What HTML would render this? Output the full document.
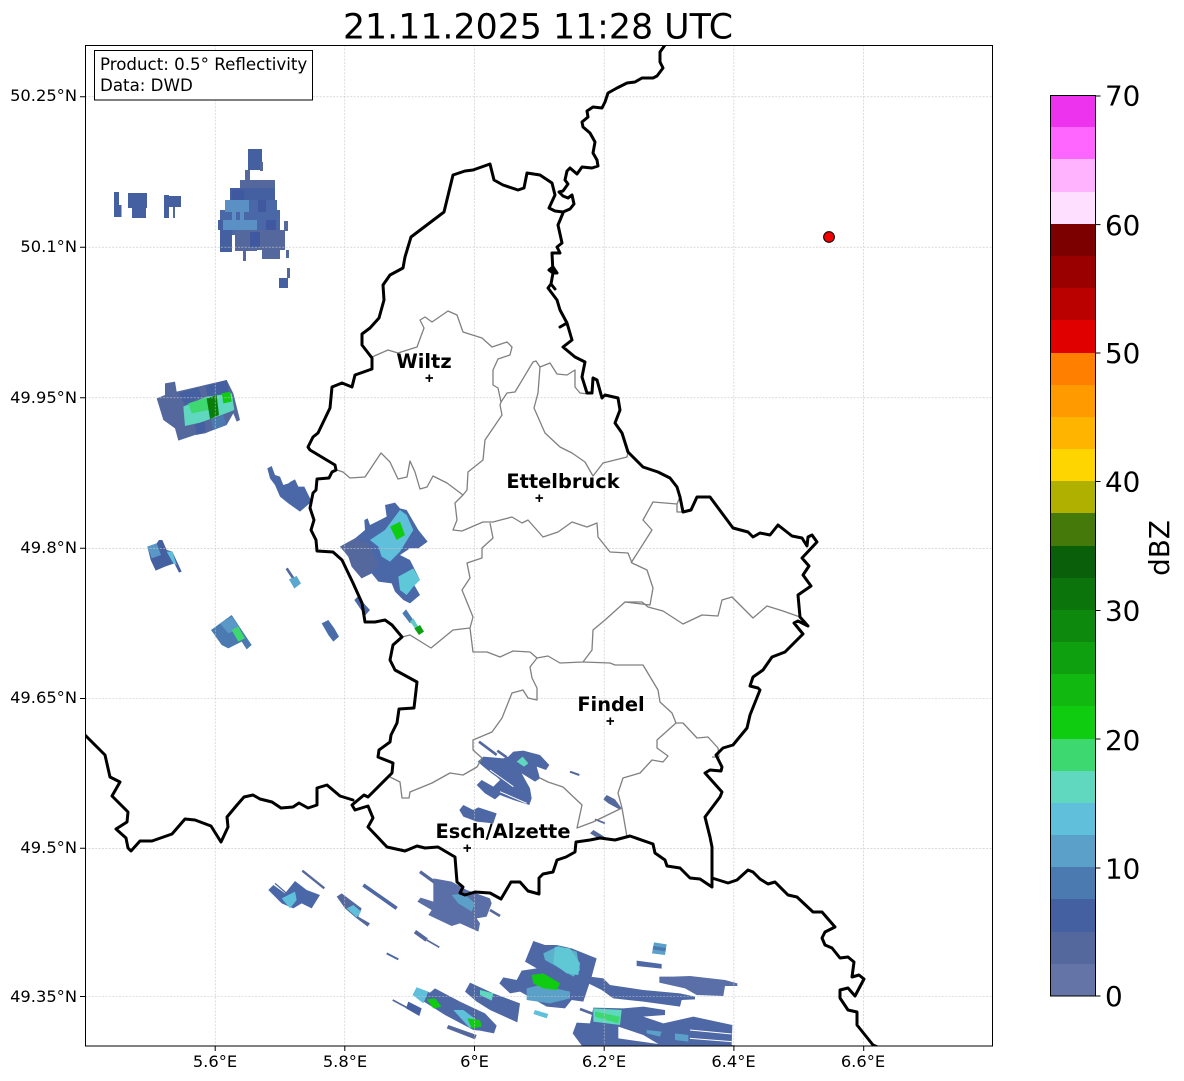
<!DOCTYPE html>
<html><head><meta charset="utf-8"><style>
html,body{margin:0;padding:0;background:#fff}
svg{display:block}
text{font-family:"DejaVu Sans",sans-serif;fill:#000}
.t{font-size:16.3px}
.n{font-size:16.67px}
.c{font-size:27.8px}
.b{font-size:19.4px;font-weight:bold;text-anchor:middle}
.m{text-anchor:middle}
.e{text-anchor:end}
</style></head><body>
<svg width="1184" height="1081" viewBox="0 0 1184 1081" xmlns="http://www.w3.org/2000/svg">
<defs><clipPath id="ax"><rect x="85" y="45" width="907.5" height="1001"/></clipPath></defs>
<rect width="1184" height="1081" fill="#fff"/>
<text x="538" y="38.5" class="m" style="font-size:34.75px">21.11.2025 11:28 UTC</text>

<g clip-path="url(#ax)">
<!-- radar top-left -->
<g fill="#4460a0">
<rect x="114" y="192" width="5" height="25"/><rect x="119" y="205" width="2.5" height="12"/>
<rect x="128" y="193" width="19" height="15"/><rect x="132" y="208" width="14" height="10"/>
<rect x="164" y="195" width="5" height="23"/><rect x="169" y="196" width="12" height="11"/><rect x="173" y="207" width="2" height="11" fill="#54689e"/>
<rect x="248" y="149" width="14" height="21"/><rect x="245" y="170" width="5" height="10" fill="#54689e"/><rect x="260" y="162" width="3" height="9" fill="#54689e"/>
<rect x="240" y="180" width="35" height="9" fill="#54689e"/>
<rect x="230" y="188" width="45" height="14"/>
<rect x="225" y="200" width="52" height="12" fill="#4a68a8"/>
<rect x="220" y="210" width="60" height="21" fill="#4a68a8"/>
<rect x="218" y="220" width="6" height="10"/>
<rect x="220" y="230" width="12" height="22"/>
<rect x="232" y="230" width="26" height="5" fill="#4a68a8"/>
<rect x="235" y="230" width="22" height="21" fill="#54689e"/>
<rect x="257" y="230" width="28" height="20" fill="#54689e"/>
<rect x="262" y="250" width="18" height="9" fill="#54689e"/>
<rect x="243" y="250" width="3" height="11" fill="#54689e"/>
<rect x="284" y="221" width="4" height="10" fill="#54689e"/>
<rect x="286" y="250" width="3" height="8" fill="#54689e"/>
<rect x="287" y="268" width="3" height="10" fill="#54689e"/>
<rect x="279" y="278" width="9" height="10"/>
<rect x="225" y="200" width="24" height="12" fill="#5a90c4"/>
<rect x="223" y="220" width="34" height="10" fill="#5a90c4"/>
<rect x="232" y="210" width="4" height="20" fill="#5a90c4"/>
<rect x="240" y="210" width="4" height="20" fill="#5a90c4"/>
<rect x="266" y="220" width="10" height="10" fill="#3f58a0"/>
<rect x="250" y="232" width="10" height="15" fill="#3f58a0"/>
<rect x="258" y="200" width="8" height="12" fill="#3f58a0"/>
<rect x="232" y="190" width="12" height="10" fill="#3f58a0"/>
</g>

<!-- radar west blobs, zoom 6 coordinates -->
<g transform="translate(85 370) scale(.33333)">
<polygon fill="#54689e" points="240,40 270,35 275,65 340,50 360,45 425,30 445,70 465,150 455,155 445,130 425,165 385,180 360,190 330,195 280,212 270,175 235,150 215,85 240,75"/>
<polygon fill="#4460a0" points="362,48 425,30 432,65 368,85"/>
<polygon fill="#4460a0" points="280,70 340,52 350,80 300,105"/>
<polygon fill="#4460a0" points="330,165 358,155 362,185 335,195"/>
<polygon fill="#4a7ab0" points="378,150 415,135 425,165 385,180"/>
<polygon fill="#60d8c0" points="295,110 365,80 440,70 448,120 410,135 345,158 300,168"/>
<polygon fill="#3dd870" points="310,100 368,82 380,118 320,130"/>
<polygon fill="#0a7d0a" points="365,85 395,75 402,135 375,147"/>
<polygon fill="#10cc10" points="410,70 435,65 440,95 415,100"/>
<polygon fill="#4a68a8" points="547,295 560,288 570,315 585,320 595,345 610,340 617,335 630,328 640,350 658,350 680,395 645,425 610,400 585,380 570,345 555,325"/>
<polygon fill="#4460a0" points="187,530 215,520 222,510 232,510 245,540 262,545 290,605 282,608 268,580 240,590 212,602 197,570"/>
<polygon fill="#5a98c8" points="187,530 215,520 228,555 200,565"/>
<polygon fill="#60c0dc" points="245,545 262,545 275,585 265,580"/>
<path d="M605 595L625 625" stroke="#54689e" stroke-width="8" fill="none"/>
<polygon fill="#5aa8d0" points="612,628 635,618 648,640 628,656"/>
<polygon fill="#4a7ab0" points="378,780 440,735 480,795 500,825 485,838 470,815 430,835 410,825"/>
<polygon fill="#5a98c8" points="405,760 440,740 465,775 430,790"/>
<polygon fill="#3dd870" points="440,780 460,770 480,805 460,815"/>
<polygon fill="#4a6ca8" points="710,760 730,750 748,775 762,800 745,815 730,795"/>
<polygon fill="#4a68a8" points="765,530 810,505 840,480 838,450 848,445 855,465 905,440 900,405 930,398 945,415 965,420 1000,480 1028,515 1000,535 975,535 945,555 975,570 1005,630 985,640 1005,675 975,700 955,690 930,665 920,640 880,635 860,610 830,625 800,590 790,560"/>
<polygon fill="#54689e" points="765,530 810,505 850,520 880,590 830,625 800,590 790,560"/>
<polygon fill="#60c0dc" points="855,510 900,480 945,420 965,435 985,480 945,545 915,575 890,560 880,530"/>
<polygon fill="#10cc10" points="915,470 945,455 960,495 935,510"/>
<polygon fill="#5fc8d8" points="940,620 985,595 1005,630 985,650 965,675 945,660"/>
<polygon fill="#4a7ab0" points="952,730 963,718 985,750 975,760"/>
<polygon fill="#60c8c8" points="975,755 985,745 1000,770 990,775"/>
<polygon fill="#0ea00e" points="988,775 1005,765 1017,785 1002,795"/>
<polygon fill="#4a68a8" points="808,690 818,680 855,720 840,737"/>
</g>

<!-- radar centre south, zoom 3 coordinates -->
<g transform="translate(300 480) scale(.33333)">
<path d="M537 785L590 825M592 812L620 832" stroke="#54689e" stroke-width="8" fill="none"/>
<polygon fill="#4e68a6" points="533,845 550,830 610,835 625,830 640,815 670,812 720,825 748,855 738,870 710,860 720,895 705,905 665,880 690,925 640,920 610,905 575,880 550,860"/>
<polygon fill="#4e68a6" points="560,860 640,880 690,925 695,955 688,975 640,960 600,945 585,958 555,940 530,915 545,900 580,920 600,900"/>
<path d="M570 870L640 920M600 935L680 970" stroke="#fff" stroke-width="3" fill="none"/>
<polygon fill="#60d8c0" points="650,845 668,830 685,850 672,860"/>
<path d="M810 875L838 885" stroke="#54689e" stroke-width="6" fill="none"/>
<polygon fill="#4e68a6" points="478,990 490,975 520,990 535,982 590,1000 580,1030 530,1025 490,1010"/>
<polygon fill="#54689e" points="910,958 920,945 945,958 965,985 958,988 925,970"/>
<path d="M885 1018L915 1030" stroke="#54689e" stroke-width="5" fill="none"/>
<polygon fill="#54689e" points="870,1060 880,1050 905,1065 925,1078 900,1078"/>
</g>

<!-- radar south, zoom 10 coordinates -->
<g transform="translate(85 720) scale(.33333)">
<polygon fill="#4a68a8" points="550,510 565,495 600,520 630,483 665,510 705,525 680,565 650,550 625,565 590,550"/>
<polygon fill="#5fc0dc" points="590,535 630,515 635,540 615,565"/>
<path d="M570 490L605 520" stroke="#54689e" stroke-width="4" fill="none"/>
<path d="M652 452L718 505" stroke="#54689e" stroke-width="7" fill="none"/>
<polygon fill="#54689e" points="755,530 770,520 830,565 820,590 855,610 848,620 815,595 780,565"/>
<polygon fill="#60c0dc" points="785,565 805,555 828,575 815,592"/>
<path d="M835 495L935 565" stroke="#4e68a6" stroke-width="11" fill="none"/>
</g>

<!-- radar south, zoom 5 coordinates -->
<g transform="translate(380 860) scale(.33333)">
<path d="M120 35L175 75" stroke="#54689e" stroke-width="10" fill="none"/>
<polygon fill="#5a6ea8" points="160,55 215,65 260,90 330,115 335,130 320,170 290,175 300,190 295,215 240,190 215,198 145,165 155,150 112,125 122,113 160,125"/>
<polygon fill="#5ba0c8" points="215,105 250,100 285,130 275,155 235,130"/>
<path d="M330 150L360 168" stroke="#54689e" stroke-width="8" fill="none"/>
<path d="M105 215L140 240" stroke="#54689e" stroke-width="12" fill="none"/>
<path d="M140 240L178 262" stroke="#54689e" stroke-width="5" fill="none"/>
<path d="M20 280L55 298" stroke="#4e68a6" stroke-width="6" fill="none"/>
<polygon fill="#4e68a6" points="435,305 460,243 495,255 530,255 575,265 650,295 635,350 625,380 610,425 575,420 555,445 500,440 420,395 390,400 358,370 370,352 410,360 425,332 470,325"/>
<polygon fill="#5bb0cc" points="490,280 535,258 590,275 600,330 580,350 530,320 495,300"/>
<polygon fill="#60c8d4" points="525,260 570,265 600,310 595,345 560,340 520,310"/>
<polygon fill="#5ba0c8" points="440,385 480,375 570,395 570,415 510,430 440,420"/>
<polygon fill="#10cc10" points="455,345 490,340 540,370 530,390 490,385 460,370"/>
<polygon fill="#4e68a6" points="630,350 670,355 690,375 790,390 900,400 945,410 945,418 905,420 900,440 790,425 700,415 665,390 625,370"/>
<polygon fill="#4e68a6" points="770,302 845,312 845,326 770,318"/>
<polygon fill="#5ba0c8" points="822,247 860,253 855,285 816,280"/>
<polygon fill="#4a7ab0" points="820,258 858,264 856,274 818,268"/>
<polygon fill="#5a6ea8" points="838,350 880,350 930,348 1035,360 1072,370 1072,378 1035,378 1030,408 950,405 915,385 838,368"/>
<path d="M600 447L640 462" stroke="#54689e" stroke-width="8" fill="none"/>
<polygon fill="#4e68a6" points="640,443 730,445 790,440 855,450 855,465 790,470 850,490 940,470 1057,495 1055,555 1095,560 615,570 578,520 590,488 630,490"/>
<polygon fill="#fff" points="715,500 790,525 835,552 715,535"/>
<polygon fill="#60d8c0" points="640,445 725,450 720,495 640,485"/>
<polygon fill="#3dd870" points="645,455 720,470 715,490 645,470"/>
<polygon fill="#5ba0c8" points="885,520 925,525 925,545 885,540"/>
<polygon fill="#5ba0c8" points="800,510 845,515 840,530 800,520"/>
<path d="M930 510L1055 522M930 535L1055 545" stroke="#fff" stroke-width="3" fill="none"/>
<polygon fill="#4e68a6" points="98,405 110,382 150,398 165,385 240,425 315,460 350,497 342,520 300,512 280,510 195,465 140,430"/>
<polygon fill="#60c0dc" points="98,405 110,382 145,395 130,430"/>
<polygon fill="#60c0dc" points="220,450 250,450 290,480 270,505"/>
<polygon fill="#10cc10" points="140,418 165,415 185,440 160,445"/>
<polygon fill="#10cc10" points="262,475 300,480 305,500 275,505"/>
<path d="M38 420L85 445" stroke="#54689e" stroke-width="5" fill="none"/>
<polygon fill="#4460a0" points="85,425 125,445 118,468 78,445"/>
<polygon fill="#54689e" points="205,495 290,525 285,538 200,505"/>
<polygon fill="#4e68a6" points="255,395 270,368 340,400 420,430 412,487 330,450 290,425"/>
<polygon fill="#60d8c0" points="300,390 340,400 335,422 300,405"/>
<polygon fill="#60c0dc" points="465,450 505,462 500,475 460,462"/>
</g>

<!-- grid -->
<g stroke="#c4c4c4" stroke-width=".6" stroke-dasharray="2 1.4" fill="none">
<path d="M215.2 45V1046M344.8 45V1046M474.5 45V1046M604.2 45V1046M733.9 45V1046M863.7 45V1046"/>
<path d="M85 96.8H992M85 247.2H992M85 397.8H992M85 548.3H992M85 698.5H992M85 848.3H992M85 996.5H992"/>
</g>

<!-- canton borders -->
<g fill="none" stroke="#808080" stroke-width="1.3" stroke-linejoin="round">
<polyline points="372,357 388,350 398,353 417,347 424,328 420,320 425,317 432,322 448,311 457,315 463,332 482,338 492,347 507,342 512,347 510,355 498,359 493,370 493,385 498,388 501,402 500,405 502,415 485,440 483,460 468,472 467,490 463,495 455,503 457,520 453,530 462,531 483,522 493,522 512,517 522,523 528,520 543,537 558,532 572,522 587,527 597,523 598,537 610,552 628,553 632,563 647,570 653,588 650,605 625,602 605,620 593,630 592,650 583,662 560,663 548,656 537,658 530,667 532,678 537,688 537,700 528,698 523,690 512,693 502,718 492,732 473,740 473,750 482,758 477,767 463,775 450,773 432,783 410,792 409,798 402,798 400,782 390,777"/>
<polyline points="625,602 642,602 648,607 663,611 683,624 702,615 718,616 722,600 732,597 753,618 767,606 783,611 800,617"/>
<polyline points="631,563 652,530 643,520 653,502 677,504 677,512 683,512"/>
<polyline points="677,504 680,497"/>
<polyline points="402,637 410,635 431,648 453,630 470,628 473,652 487,652 500,657 513,651 530,652 537,658"/>
<polyline points="470,628 473,617 462,590 470,578 467,563 482,558 482,548 493,538 490,523"/>
<polyline points="583,662 610,663 615,665 643,665 658,690 660,702 672,713 676,723 683,723 697,738 708,737 718,748 719,757 712,757"/>
<polyline points="676,723 657,740 657,748 668,756 663,762 652,760 640,773 623,778 618,793 622,808 627,837"/>
<polyline points="622,808 593,822 577,828 582,805 563,787 548,782 540,778"/>
<polyline points="501,402 507,393 515,392 533,362 536,361 540,367 550,363 557,374 567,375 575,370 575,387 580,393 588,394"/>
<polyline points="540,367 538,393 534,408 545,433 560,447 572,453 585,462 593,476 603,463 627,457 628,452"/>
<polyline points="337,470 343,472 350,478 365,477 381,453 390,462 398,479 407,477 410,461 415,472 420,489 427,487 433,476 447,483 463,495"/>
</g>

<!-- country borders -->
<g fill="none" stroke="#000" stroke-width="3" stroke-linejoin="round" stroke-linecap="round">
<polyline points="665,45 660,52 660,62 663,68 657,76 653,78 642,78 635,82 627,83 617,88 608,93 605,102 602,108 593,107 587,111 588,117 582,122 583,127 590,133 595,142 593,153 597,160 598,166 592,168 582,167 577,174 570,168 567,171 565,180 568,184 563,191 559,192 563,196 568,198 572,195 574,204 570,209 563,212 555,211 549,208 555,195 552,183 540,175 527,173 524,188 518,190 503,185 494,180 490,164 473,170 465,171 453,175 444,212 411,237 405,257 403,268 390,275 383,285 384,300 379,318 370,328 362,334 362,345 372,358 372,369 355,375 352,387 342,383 332,387 330,408 318,433 313,437 308,447 310,450 335,465 336,470 332,472 329,478 317,479 316,490 313,493 310,508 314,520 311,530 316,540 317,551 333,552 342,560 353,583 362,603 365,622 375,622 385,620 392,625 402,637 393,645 390,660 395,670 417,682 414,708 399,709 397,723 391,735 390,742 379,750 378,757 393,763 392,773 368,797 364,795 352,805 355,810 368,806 373,818 368,827 387,847 405,851 417,846 425,848 438,847 455,857 457,882 463,887 460,893 465,895 475,892 490,893 501,899 511,882 520,882 528,891 539,894 539,878 543,874 553,872 557,860 566,857 575,852 576,842 590,840 600,838 615,840 630,836 653,844 655,853 665,860 667,866 680,868 690,878 700,879 712,887 712,847 710,837 705,817 720,797 722,792 705,773 710,770 721,771 722,767 716,755 723,748 733,745 747,728 750,715 760,690 758,688 750,686 753,677 763,670 772,657 785,652 803,634 794,623 798,621 808,626 800,617 798,595 811,586 803,575 809,566 802,558 817,542 812,535 808,537 807,546 802,538 792,536 778,525 770,535 760,533 753,537 748,532 733,528 710,497 697,497 691,510 683,512 680,497 677,487 670,478 658,472 643,467 628,452 622,433 615,423 620,410 618,398 605,395 602,398 597,380 593,378 592,393 587,393 582,377 585,362 575,357 563,347 572,340 567,323 560,327 567,323 560,310 557,300 548,288 551,284 555,289 551,284 553,273 549,270 553,267 557,273 553,273 552,253 560,253 557,247 562,243 558,225 563,213"/>
<polyline points="85,735 105,755 110,777 120,782 112,796 128,812 127,822 116,829 126,838 128,848 131,851 140,841 152,841 172,834 185,819 195,820 211,826 221,842 228,827 227,817 237,805 244,797 253,795 260,799 272,802 281,808 293,807 299,803 308,808 317,805 317,788 327,785 340,796 353,800"/>
<polyline points="712,878 728,883 737,880 748,870 753,872 760,879 768,884 775,882 788,895 797,897 813,912 822,912 835,927 825,932 822,938 825,945 832,948 840,958 848,957 854,962 852,977 859,975 864,979 855,996 848,988 840,990 840,998 848,1010 857,1012 857,1025 873,1045 880,1048"/>
</g>

<!-- radar site -->
<circle cx="829" cy="237" r="5.4" fill="#f00000" stroke="#000" stroke-width="1"/>

<!-- city markers -->
<g stroke="#000" stroke-width="1.7" fill="none">
<path d="M425.5 378H433M429.3 374.5V382M535.5 498H543M539.3 494.5V502M606.5 721H614M610.3 717.5V725M463.5 848H471M467.3 844.5V852"/>
</g>
<text x="424" y="368" class="b">Wiltz</text>
<text x="563" y="488" class="b">Ettelbruck</text>
<text x="611" y="711" class="b">Findel</text>
<text x="503" y="838" class="b">Esch/Alzette</text>

<!-- info box -->
<rect x="94.5" y="50.5" width="218" height="49.5" fill="#fff" stroke="#000" stroke-width="1"/>
<text x="100" y="70" class="n">Product: 0.5° Reflectivity</text>
<text x="100" y="91" class="n">Data: DWD</text>
</g>

<!-- axes frame -->
<rect x="85.5" y="45.5" width="907" height="1000.5" fill="none" stroke="#000" stroke-width="1"/>
<g stroke="#000" stroke-width="1" fill="none">
<path d="M215.2 1046v5M344.8 1046v5M474.5 1046v5M604.2 1046v5M733.9 1046v5M863.7 1046v5"/>
<path d="M85 96.8h-5M85 247.2h-5M85 397.8h-5M85 548.3h-5M85 698.5h-5M85 848.3h-5M85 996.5h-5"/>
</g>
<text x="215" y="1067" class="t m">5.6°E</text>
<text x="345" y="1067" class="t m">5.8°E</text>
<text x="474.5" y="1067" class="t m">6°E</text>
<text x="604" y="1067" class="t m">6.2°E</text>
<text x="733.5" y="1067" class="t m">6.4°E</text>
<text x="863" y="1067" class="t m">6.6°E</text>
<text x="77" y="101" class="t e">50.25°N</text>
<text x="77" y="252" class="t e">50.1°N</text>
<text x="77" y="403" class="t e">49.95°N</text>
<text x="77" y="553" class="t e">49.8°N</text>
<text x="77" y="703" class="t e">49.65°N</text>
<text x="77" y="853" class="t e">49.5°N</text>
<text x="77" y="1002" class="t e">49.35°N</text>

<!-- colorbar -->
<g shape-rendering="crispEdges">
<rect x="1050.5" y="95.5" width="45" height="32.5" fill="#ee33ee"/>
<rect x="1050.5" y="127" width="45" height="32.5" fill="#ff66ff"/>
<rect x="1050.5" y="159" width="45" height="33" fill="#ffb3ff"/>
<rect x="1050.5" y="192" width="45" height="32" fill="#ffdfff"/>
<rect x="1050.5" y="224" width="45" height="32" fill="#7d0000"/>
<rect x="1050.5" y="256" width="45" height="32" fill="#9a0000"/>
<rect x="1050.5" y="288" width="45" height="32" fill="#bb0000"/>
<rect x="1050.5" y="320" width="45" height="33" fill="#e00000"/>
<rect x="1050.5" y="353" width="45" height="32" fill="#ff7f00"/>
<rect x="1050.5" y="385" width="45" height="32" fill="#ff9a00"/>
<rect x="1050.5" y="417" width="45" height="32" fill="#ffb500"/>
<rect x="1050.5" y="449" width="45" height="32" fill="#ffd500"/>
<rect x="1050.5" y="481" width="45" height="32" fill="#b0b000"/>
<rect x="1050.5" y="513" width="45" height="33" fill="#457a0a"/>
<rect x="1050.5" y="546" width="45" height="32" fill="#0a5f0a"/>
<rect x="1050.5" y="578" width="45" height="32" fill="#0b750b"/>
<rect x="1050.5" y="610" width="45" height="32" fill="#0d8a0d"/>
<rect x="1050.5" y="642" width="45" height="32" fill="#0fa00f"/>
<rect x="1050.5" y="674" width="45" height="32" fill="#10b810"/>
<rect x="1050.5" y="706" width="45" height="33" fill="#10cc10"/>
<rect x="1050.5" y="739" width="45" height="32" fill="#3dd870"/>
<rect x="1050.5" y="771" width="45" height="32" fill="#60d8c0"/>
<rect x="1050.5" y="803" width="45" height="32" fill="#60c0dc"/>
<rect x="1050.5" y="835" width="45" height="32" fill="#5ba0c8"/>
<rect x="1050.5" y="867" width="45" height="32" fill="#4a7ab0"/>
<rect x="1050.5" y="899" width="45" height="33" fill="#4460a0"/>
<rect x="1050.5" y="932" width="45" height="32" fill="#54689e"/>
<rect x="1050.5" y="964" width="45" height="32" fill="#6474a6"/>
</g>
<rect x="1050.5" y="95.5" width="45" height="900.5" fill="none" stroke="#000" stroke-width="1"/>
<path d="M1095.5 96h5M1095.5 224.6h5M1095.5 353h5M1095.5 481.5h5M1095.5 610.5h5M1095.5 739h5M1095.5 868h5M1095.5 996h5" stroke="#000" stroke-width="1" fill="none"/>
<text x="1105" y="105.5" class="c">70</text>
<text x="1105" y="235" class="c">60</text>
<text x="1105" y="363" class="c">50</text>
<text x="1105" y="491.5" class="c">40</text>
<text x="1105" y="620.5" class="c">30</text>
<text x="1105" y="750" class="c">20</text>
<text x="1105" y="878.5" class="c">10</text>
<text x="1105" y="1006" class="c">0</text>
<text transform="translate(1169 548) rotate(-90)" class="c m">dBZ</text>
</svg>
</body></html>
